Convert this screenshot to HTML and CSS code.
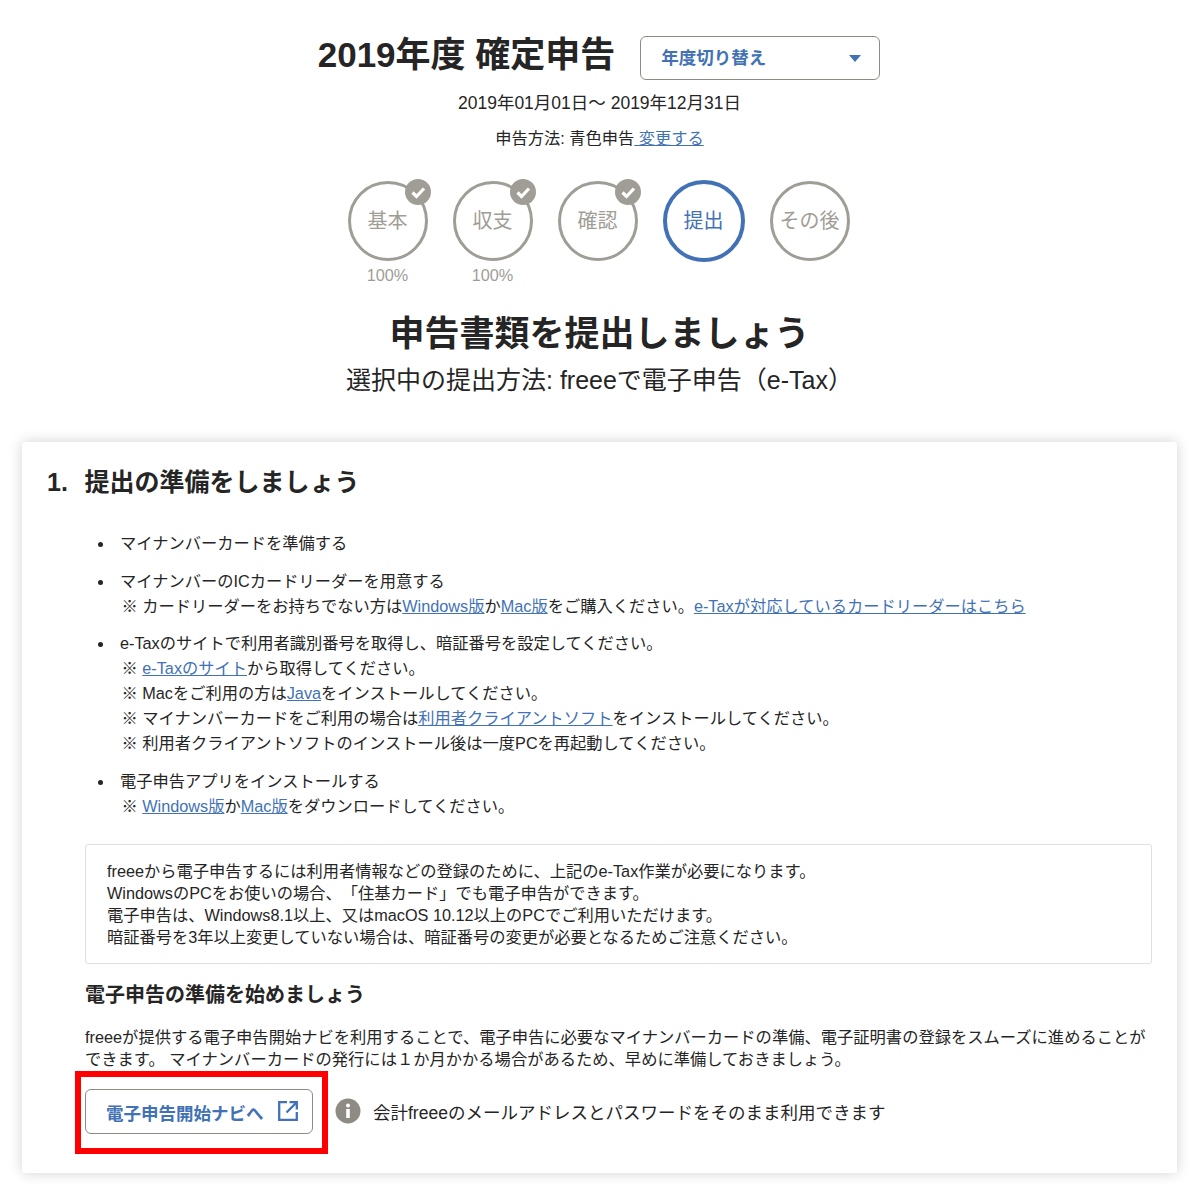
FILE: index.html
```html
<!DOCTYPE html>
<html lang="ja">
<head>
<meta charset="utf-8">
<title>2019年度 確定申告</title>
<link rel="stylesheet" href="styles.css">
</head>
<body>
<header class="head">
  <div class="title-row">
    <h1 class="title">2019年度 確定申告</h1>
    <button class="year-select"><span>年度切り替え</span><i class="caret"></i></button>
  </div>
  <p class="period">2019年01月01日〜 2019年12月31日</p>
  <p class="method">申告方法: 青色申告<a href="#"> 変更する</a></p>
</header>
<ol class="steps">
  <li class="step"><div class="circle">基本<svg class="check" viewBox="0 0 26 26"><circle cx="13" cy="13" r="13" fill="#a09d96"/><path d="M7.5 13.5l4 4 7.5-8" fill="none" stroke="#fff" stroke-width="3.2"/></svg></div><span class="pct">100%</span></li>
  <li class="step"><div class="circle">収支<svg class="check" viewBox="0 0 26 26"><circle cx="13" cy="13" r="13" fill="#a09d96"/><path d="M7.5 13.5l4 4 7.5-8" fill="none" stroke="#fff" stroke-width="3.2"/></svg></div><span class="pct">100%</span></li>
  <li class="step"><div class="circle">確認<svg class="check" viewBox="0 0 26 26"><circle cx="13" cy="13" r="13" fill="#a09d96"/><path d="M7.5 13.5l4 4 7.5-8" fill="none" stroke="#fff" stroke-width="3.2"/></svg></div></li>
  <li class="step step-current"><div class="circle current">提出</div></li>
  <li class="step"><div class="circle">その後</div></li>
</ol>
<h2 class="heading">申告書類を提出しましょう</h2>
<p class="sub">選択中の提出方法: freeeで電子申告（e-Tax）</p>
<main class="card">
  <h3 class="card-title"><span class="num">1.</span>提出の準備をしましょう</h3>
  <ul class="list">
    <li>マイナンバーカードを準備する</li>
    <li>マイナンバーのICカードリーダーを用意する<br><span class="note">※ カードリーダーをお持ちでない方は<a href="#">Windows版</a>か<a href="#">Mac版</a>をご購入ください。<a href="#">e-Taxが対応しているカードリーダーはこちら</a></span></li>
    <li>e-Taxのサイトで利用者識別番号を取得し、暗証番号を設定してください。<br><span class="note">※ <a href="#">e-Taxのサイト</a>から取得してください。</span><br><span class="note">※ Macをご利用の方は<a href="#">Java</a>をインストールしてください。</span><br><span class="note">※ マイナンバーカードをご利用の場合は<a href="#">利用者クライアントソフト</a>をインストールしてください。</span><br><span class="note">※ 利用者クライアントソフトのインストール後は一度PCを再起動してください。</span></li>
    <li>電子申告アプリをインストールする<br><span class="note">※ <a href="#">Windows版</a>か<a href="#">Mac版</a>をダウンロードしてください。</span></li>
  </ul>
  <div class="info-box">freeeから電子申告するには利用者情報などの登録のために、上記のe-Tax作業が必要になります。<br>WindowsのPCをお使いの場合、「住基カード」でも電子申告ができます。<br>電子申告は、Windows8.1以上、又はmacOS 10.12以上のPCでご利用いただけます。<br>暗証番号を3年以上変更していない場合は、暗証番号の変更が必要となるためご注意ください。</div>
  <h4 class="start-title">電子申告の準備を始めましょう</h4>
  <p class="start-text">freeeが提供する電子申告開始ナビを利用することで、電子申告に必要なマイナンバーカードの準備、電子証明書の登録をスムーズに進めることができます。 マイナンバーカードの発行には１か月かかる場合があるため、早めに準備しておきましょう。</p>
  <div class="action">
    <a class="nav-btn" href="#"><span class="nav-label">電子申告開始ナビへ</span><svg class="ext" viewBox="0 0 20 20"><path d="M9 1.2H1.2v17.6h17.6V11M11.5 1.2h7.3v7.3M18.5 1.5L8.5 11.5" fill="none" stroke="#4272b5" stroke-width="2.3"/></svg><span class="highlight"></span></a>
    <svg class="info-icon" viewBox="0 0 26 26"><circle cx="13" cy="13" r="12.5" fill="#8e8b84"/><circle cx="13" cy="7.5" r="2" fill="#fff"/><rect x="11.2" y="11" width="3.6" height="9" fill="#fff"/></svg>
    <span class="action-text">会計freeeのメールアドレスとパスワードをそのまま利用できます</span>
  </div>
</main>
</body>
</html>
```
FILE: styles.css
```css
* { box-sizing: border-box; }
body {
  margin: 0;
  padding: 36px 24px 18px 22px;
  background: #fff;
  color: #252525;
  font-family: "Liberation Sans", "Noto Sans CJK JP", sans-serif;
  font-size: 16.25px;
  text-spacing-trim: space-all;
}
a { color: #4272b5; text-decoration: underline; }
.head { text-align: center; }
.title-row { display: flex; justify-content: center; align-items: center; gap: 25px; height: 44px; padding-right: 1px; }
.title { margin: 0; font-size: 35px; font-weight: 700; line-height: 40px; position: relative; top: -3px; }
.year-select {
  width: 240px; height: 44px; padding: 0 18px 4px 20px;
  display: flex; align-items: center; justify-content: space-between;
  background: #fff; border: 1px solid #8e8b84; border-radius: 6px;
  color: #4272b5; font: 700 17.5px "Liberation Sans", "Noto Sans CJK JP", sans-serif;
}
.caret { width: 0; height: 0; margin-top: 4px; border-left: 6px solid transparent; border-right: 6px solid transparent; border-top: 7px solid #4272b5; }
.period { margin: 12px 0 0; font-size: 17.5px; line-height: 22px; }
.method { margin: 13px 0 0; font-size: 16.25px; line-height: 22px; }
.steps { list-style: none; margin: 32px 0 0; padding: 0 2px 0 0; display: flex; justify-content: center; gap: 25px; height: 106px; }
.step { width: 80px; display: flex; flex-direction: column; align-items: center; }
.step-current { width: 82px; }
.circle {
  position: relative; width: 80px; height: 80px; flex: none; padding-bottom: 3px;
  display: flex; align-items: center; justify-content: center;
  border: 3px solid #a09d96; border-radius: 50%;
  color: #a09d96; font-size: 20px; white-space: nowrap;
}
.circle.current { width: 82px; height: 82px; margin-top: -1px; border: 4px solid #4272b5; color: #4272b5; }
.check { position: absolute; top: -5px; right: -6px; width: 26px; height: 26px; }
.pct { color: #a09d96; margin-top: 3px; line-height: 22px; }
.heading { margin: 24px 0 0; text-align: center; font-size: 35px; font-weight: 700; line-height: 46px; }
.sub { margin: 0; text-align: center; font-size: 25px; line-height: 46px; }
.card {
  margin-top: 39px; height: 731px; padding: 20px 25px 0 25px;
  background: #fff; border-radius: 3px;
  box-shadow: 0 0 14px rgba(0,0,0,.18);
}
.card-title { margin: 0; display: flex; font-size: 25px; font-weight: 700; line-height: 40px; }
.num { width: 37.5px; }
.list { list-style: none; margin: 29px 0 0; padding: 0 0 0 73px; line-height: 25px; }
.list li { position: relative; margin-bottom: 12.67px; }
.list li::before { content: ""; position: absolute; left: -22px; top: 11px; width: 5px; height: 5px; border-radius: 50%; background: #252525; }
.note { padding-left: 1.5px; }
.info-box { margin: 25px 0 0 38px; height: 120px; padding: 15px 21px; border: 1px solid #e0dfdc; border-radius: 3px; line-height: 22px; }
.start-title { margin: 15px 0 0 38px; font-size: 20px; font-weight: 700; line-height: 32px; }
.start-text { margin: 15px 0 0 38px; font-size: 16.3px; line-height: 22px; }
.action { margin: 19px 0 0 38px; display: flex; align-items: center; }
.nav-btn {
  position: relative; width: 228px; height: 45px; padding-left: 20px;
  display: flex; align-items: center;
  border: 1px solid #8e8b84; border-radius: 6px;
  color: #4272b5; font-size: 17.5px; font-weight: 700; text-decoration: none; white-space: nowrap;
}
.nav-label { padding-top: 2px; }
.ext { width: 20px; height: 20px; margin-left: 14px; }
.highlight { position: absolute; left: -11px; top: -19px; width: 253px; height: 83px; border: 6px solid #f00; }
.info-icon { width: 26px; height: 26px; margin-left: 22px; }
.action-text { margin-left: 12px; font-size: 17.5px; }
```
